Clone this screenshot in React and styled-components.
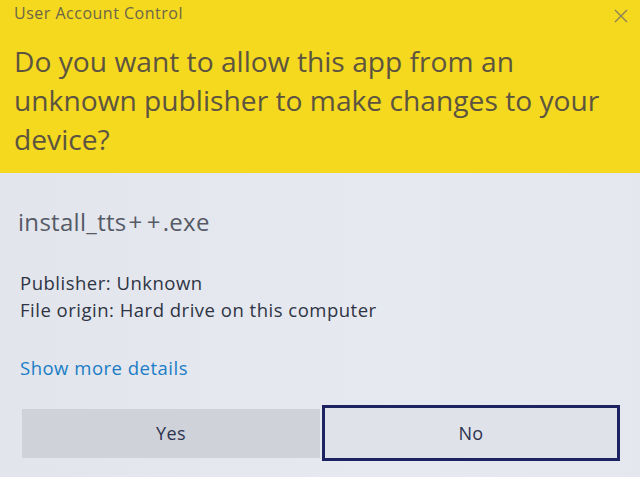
import React from 'react';
import styled, { createGlobalStyle } from 'styled-components';

const GlobalStyle = createGlobalStyle`
  html, body {
    margin: 0;
    padding: 0;
    background: #e3e6ec;
  }
  * { box-sizing: border-box; }
`;

export default function App() {
  return (
    <>
      <GlobalStyle />
      <Dialog>
        <Banner>
          <TitleBar>
            <Title>User Account Control</Title>
            <Close aria-label="Close">
              <svg width="14" height="14" viewBox="0 0 14 14">
                <path d="M1 1 L13 13 M13 1 L1 13" stroke="#8a7d5a" strokeWidth="1.3" fill="none" />
              </svg>
            </Close>
          </TitleBar>
          <Question>
            Do you want to allow this app from an unknown publisher to make changes to your device?
          </Question>
        </Banner>
        <Body>
          <FileName>
            install_tts<Plus>+</Plus><Plus>+</Plus>.exe
          </FileName>
          <Details>
            <div>Publisher: Unknown</div>
            <div>File origin: Hard drive on this computer</div>
          </Details>
          <MoreLink href="#">Show more details</MoreLink>
          <Buttons>
            <Button>Yes</Button>
            <Button focused>No</Button>
          </Buttons>
        </Body>
      </Dialog>
    </>
  );
}

const Dialog = styled.div`
  width: 640px;
  height: 477px;
  overflow: hidden;
  background: linear-gradient(90deg, #e2e5ec 0%, #e6e9ef 60%, #e4e7ee 100%);
  font-family: "Open Sans", "Noto Sans", sans-serif;
`;

const Banner = styled.div`
  height: 173px;
  background: #f4d91f;
  padding: 0 0 0 14px;
`;

const TitleBar = styled.div`
  display: flex;
  justify-content: space-between;
  align-items: center;
  height: 26px;
  padding-right: 12px;
`;

const Title = styled.div`
  font-size: 16px;
  letter-spacing: 0.5px;
  color: #6e6548;
  line-height: 24px;
`;

const Close = styled.div`
  display: flex;
  align-items: center;
  margin-top: 6px;
`;

const Question = styled.div`
  margin-top: 16px;
  font-size: 28.2px;
  line-height: 39px;
  color: #5d5440;
  padding-right: 30px;
`;

const Body = styled.div`
  padding: 0 20px 0 20px;
  display: flex;
  flex-direction: column;
`;

const FileName = styled.div`
  margin-top: 34px;
  margin-left: -2px;
  font-size: 24px;
  letter-spacing: 0.3px;
  line-height: 30px;
  color: #555a66;
`;

const Plus = styled.span`
  padding: 0 2px;
`;

const Details = styled.div`
  margin-top: 32px;
  font-size: 18.5px;
  letter-spacing: 0.5px;
  line-height: 27px;
  color: #2e3444;
`;

const MoreLink = styled.a`
  margin-top: 33px;
  font-size: 18.5px;
  letter-spacing: 0.5px;
  line-height: 24px;
  color: #1a7dc6;
  text-decoration: none;
  align-self: flex-start;
`;

const Buttons = styled.div`
  margin-top: 25px;
  display: flex;
  align-items: center;
  gap: 2px;
  padding-left: 2px;
`;

const Button = styled.div`
  width: 298px;
  height: ${(p) => (p.focused ? '56px' : '49px')};
  display: flex;
  align-items: center;
  justify-content: center;
  font-size: 18px;
  letter-spacing: 0.4px;
  color: #2c3350;
  background: ${(p) => (p.focused ? '#dfe2e9' : '#cfd2d8')};
  border: ${(p) => (p.focused ? '3px solid #1d2260' : 'none')};
`;
